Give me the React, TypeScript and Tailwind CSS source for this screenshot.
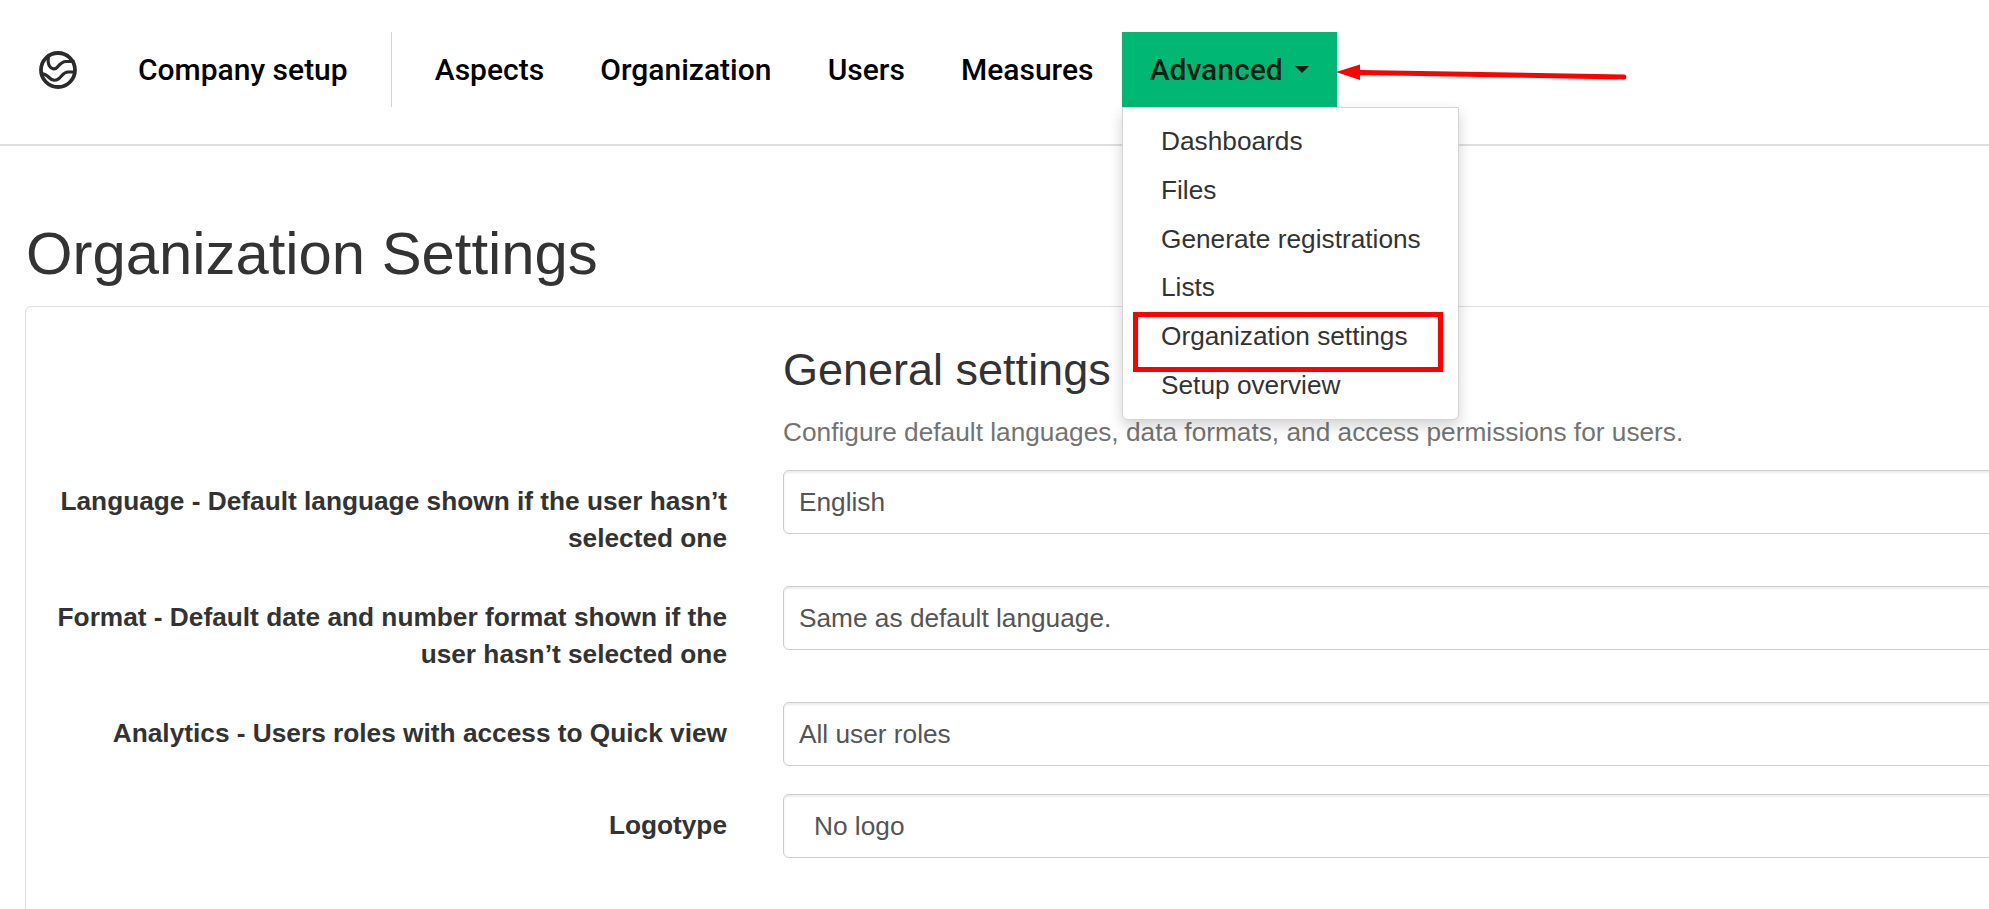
export default function App() {
  const navs = ["Aspects", "Organization", "Users", "Measures"];
  const items = ["Dashboards", "Files", "Generate registrations", "Lists", "Organization settings", "Setup overview"];
  const rows = [
    { label: "Language - Default language shown if the user hasn’t selected one", value: "English", h: "h-[116px]" },
    { label: "Format - Default date and number format shown if the user hasn’t selected one", value: "Same as default language.", h: "h-[116px]" },
    { label: "Analytics - Users roles with access to Quick view", value: "All user roles", h: "h-[92px]" },
    { label: "Logotype", value: "No logo", h: "h-[92px]", extra: true },
  ];
  return (
    <div className="relative w-[1989px] h-[909px] overflow-hidden bg-white font-['Liberation_Sans',sans-serif] text-[#333333]">
      <header className="h-[146px] border-b-2 border-[#dfdfdf] flex items-start pt-[32px] font-['Roboto',sans-serif] font-medium text-[30px] text-black">
        <div className="flex items-center h-[75px] pl-[36.5px]">
          <svg width="42" height="42" viewBox="0 0 42 42" fill="none" stroke="#2b2b2b" strokeWidth="3.8">
            <circle cx="21" cy="21" r="17" />
            <path strokeWidth="3.2" d="M11.5 6.5 C11 10 10.5 14 12.5 17 C14.5 20.5 18 21 20.5 18 C23 15 25 12.5 29 12.5 L37.5 12.5" />
            <path strokeWidth="3.2" d="M4 25 C7 24 9.5 26 12 28.5 C15 31.5 19 32 22 29.5 C25 27 26.5 23 31 23 L38 23" />
          </svg>
        </div>
        <div className="flex items-center h-[75px] pl-[59.5px] pr-[43px] border-r border-[#d4d4d4]">Company setup</div>
        <nav className="flex ml-[15px] h-[75px]">
          {navs.map((n) => (
            <a key={n} className="flex items-center px-[28.1px]">{n}</a>
          ))}
          <a className="flex items-center gap-[12px] px-[28.1px] bg-[#00b873] text-[#0c1f16]">
            Advanced
            <span className="w-0 h-0 border-x-[7px] border-x-transparent border-t-[7px] border-t-[#0c1f16]" />
          </a>
        </nav>
      </header>

      <main className="w-[2400px] pl-[25px] pt-[70px]">
        <h1 className="text-[59.8px] leading-[76px] pl-[1px] pb-[14px] text-[#333333]">Organization Settings</h1>
        <section className="border border-[#dedede] rounded-[6px] h-[700px] pt-[35px]">
          <div className="ml-[757px]">
            <h2 className="text-[45px] leading-[56px]">General settings</h2>
            <p className="text-[26.25px] leading-[34px] mt-[17px] text-[#737373]">Configure default languages, data formats, and access permissions for users.</p>
          </div>
          <div className="mt-[21px] flex flex-col">
            {rows.map((r) => (
              <div key={r.label} className={`flex items-start ${r.h}`}>
                <label className="w-[701px] pl-[30px] text-right font-bold text-[26.25px] leading-[37px] pt-[13px]">{r.label}</label>
                <div className={`ml-[56px] w-[1500px] h-[64px] border border-[#cccccc] rounded-[6px] flex items-center pt-[1px] text-[26.25px] text-[#555555] shadow-[inset_0_2px_2px_rgba(0,0,0,0.075)] ${r.extra ? "pl-[30px]" : "pl-[15px]"}`}>{r.value}</div>
              </div>
            ))}
          </div>
        </section>
      </main>

      <div className="absolute left-[1122px] top-[107px] w-[337px] h-[313px] bg-white border border-[#d4d4d4] rounded-b-[6px] shadow-[0_6px_14px_rgba(0,0,0,0.18)] pt-[9.5px]">
        {items.map((i) => (
          <div key={i} className="h-[48.7px] flex items-center pl-[38px] text-[26.25px] text-[#333333]">{i}</div>
        ))}
      </div>

      <div className="absolute left-[1133px] top-[312px] w-[310px] h-[60px] border-[5px] border-[#ff0000]" />

      <svg className="absolute left-[1330px] top-[55px]" width="310" height="35" viewBox="0 0 310 35">
        <path d="M30 17.5 L294 22" stroke="#ff0000" strokeWidth="5" strokeLinecap="round" />
        <path d="M6 17 L30 9.5 L30 25 Z" fill="#ff0000" />
      </svg>
    </div>
  );
}
